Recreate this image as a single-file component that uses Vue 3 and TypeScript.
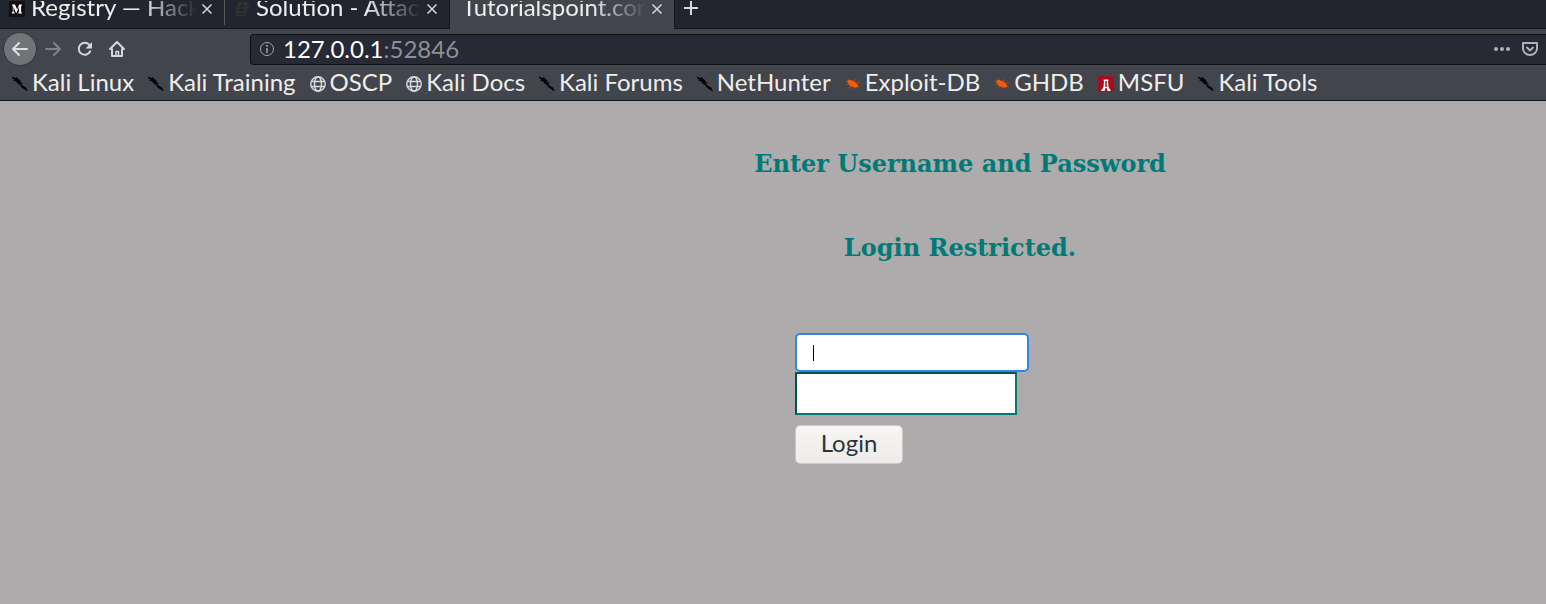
<script setup lang="ts">
import { ref } from 'vue'

interface Bookmark {
  name: string
  icon: 'kali' | 'globe' | 'bug' | 'msfu'
}

const bookmarks: Bookmark[] = [
  { name: 'Kali Linux', icon: 'kali' },
  { name: 'Kali Training', icon: 'kali' },
  { name: 'OSCP', icon: 'globe' },
  { name: 'Kali Docs', icon: 'globe' },
  { name: 'Kali Forums', icon: 'kali' },
  { name: 'NetHunter', icon: 'kali' },
  { name: 'Exploit-DB', icon: 'bug' },
  { name: 'GHDB', icon: 'bug' },
  { name: 'MSFU', icon: 'msfu' },
  { name: 'Kali Tools', icon: 'kali' },
]

const tabs = [
  { title: 'Registry — Hack', icon: 'medium' },
  { title: 'Solution - Attack', icon: 'book' },
  { title: 'Tutorialspoint.com', icon: '' },
]
const activeTab = ref(2)
const username = ref('')
const password = ref('')
</script>

<template>
  <div class="browser">
    <nav class="tab-strip" aria-label="Tabs">
      <div v-for="(tab, i) in tabs" :key="tab.title" class="tab" :class="{ active: i === activeTab }">
        <svg v-if="tab.icon === 'medium'" class="icon" viewBox="0 0 16 16" aria-hidden="true">
          <rect width="16" height="16" fill="#12100e" />
          <path d="M3 3.5h3l2.2 5 2-5H13v.8l-.9.8v5.8l.9.8v.8H9.2v-.8l.9-.8V5.800L7.500 12H7L4.500 6v4.600l1.100 1.200v.7H2.800v-.7l1-1.200V5.200L3 4.200z" fill="#fff" />
        </svg>
        <svg v-else-if="tab.icon === 'book'" class="icon" viewBox="0 0 16 16" aria-hidden="true">
          <path d="M4.500 1h9.500l-3 11.500H1.500z" fill="#34332f" />
          <path d="M1.500 12.500l1 2H11.500L15 3" fill="none" stroke="#34332f" />
          <path d="M6 4.500l1 1.500 2-2 1.500 2M5 9.500l2-1.500 1 2 2-2" fill="none" stroke="#202126" stroke-width="1.500" />
        </svg>
        <button class="tab-title" @click="activeTab = i">{{ tab.title }}</button>
        <button class="tab-close" aria-label="Close tab">
          <svg class="icon" viewBox="0 0 16 16" aria-hidden="true">
            <path d="M3.500 3.500l9 9M12.500 3.500l-9 9" stroke="#d6d7d8" stroke-width="1.500" />
          </svg>
        </button>
      </div>
      <button class="new-tab" aria-label="New tab">
        <svg class="icon" viewBox="0 0 16 16" aria-hidden="true">
          <path d="M8 1v14M1 8h14" stroke="#d8d9da" stroke-width="2" />
        </svg>
      </button>
    </nav>

    <div class="toolbar">
      <button class="nav-button back" aria-label="Back">
        <svg class="icon" viewBox="0 0 16 16" fill="none" stroke="#dedede" stroke-width="2" stroke-linecap="round" stroke-linejoin="round" aria-hidden="true">
          <path d="M15 8H1.500M7 2L1 8l6 6" />
        </svg>
      </button>
      <button class="nav-button" aria-label="Forward">
        <svg class="icon" viewBox="0 0 16 16" fill="none" stroke="#808185" stroke-width="2" stroke-linecap="round" stroke-linejoin="round" aria-hidden="true">
          <path d="M1 8h13.500M9 2l6 6-6 6" />
        </svg>
      </button>
      <button class="nav-button" aria-label="Reload">
        <svg class="icon" viewBox="0 0 16 16" fill="none" aria-hidden="true">
          <path d="M13.200 10.300A6 6 0 1 1 12.300 3.800" stroke="#d5d6d5" stroke-width="2" stroke-linecap="round" />
          <path d="M15 1v6.500H8.500z" fill="#d5d6d5" />
        </svg>
      </button>
      <button class="nav-button" aria-label="Home">
        <svg class="icon" viewBox="0 0 16 16" fill="none" stroke="#d5d6d5" stroke-width="2" stroke-linecap="round" stroke-linejoin="round" aria-hidden="true">
          <path d="M1 8l7-7 7 7M3 8v7h10V8" />
          <path d="M7 15v-4.500h2.500V15" stroke-width="1.500" />
        </svg>
      </button>
      <div class="address">
        <svg class="icon" viewBox="0 0 16 16" aria-hidden="true">
          <circle cx="8" cy="8" r="6.500" fill="none" stroke="#a5a6aa" />
          <path d="M8 7v5" stroke="#a5a6aa" stroke-width="1.500" />
          <circle cx="8" cy="4.800" r="1" fill="#a5a6aa" />
        </svg>
        <span class="url">127.0.0.1<span class="port">:52846</span></span>
        <button class="page-action" aria-label="Page actions">
          <svg class="icon" viewBox="0 0 16 16" fill="#b1b1b3" aria-hidden="true">
            <circle cx="2" cy="8" r="2" /><circle cx="8" cy="8" r="2" /><circle cx="14" cy="8" r="2" />
          </svg>
        </button>
        <button class="page-action" aria-label="Save to Pocket">
          <svg class="icon" viewBox="0 0 16 16" fill="none" stroke="#b1b1b3" stroke-width="2" stroke-linecap="round" stroke-linejoin="round" aria-hidden="true">
            <path d="M1 2h14v5.500a7 6.500 0 0 1-14 0z" />
            <path d="M5 6.500l3 3 3-3" />
          </svg>
        </button>
      </div>
    </div>

    <nav class="bookmarks" aria-label="Bookmarks">
      <a v-for="b in bookmarks" :key="b.name" class="bookmark" href="#">
        <svg v-if="b.icon === 'kali'" class="icon" viewBox="0 0 16 16" aria-hidden="true">
          <path d="M0 .5l3 1.500L5 1l.8 1.500L8 4l1.200 2 .3 2.500 2 1.500 2.500 1.500L16 15l-2-.5-2-1.500-2.500-1.500L8 9 5.500 7.500 4 5.500 1 4.500l1.500-.8L0 2z" fill="#050505" />
          <path d="M8 5l3 3" stroke="#1c1d20" fill="none" />
        </svg>
        <svg v-else-if="b.icon === 'globe'" class="icon" viewBox="0 0 16 16" fill="none" stroke="#d7d8d8" stroke-width="1.500" aria-hidden="true">
          <circle cx="8" cy="8" r="7.200" />
          <ellipse cx="8" cy="8" rx="3.500" ry="7.200" />
          <path d="M1.500 5.500h13M1.500 10.500h13" />
        </svg>
        <svg v-else-if="b.icon === 'bug'" class="icon" viewBox="0 0 16 16" aria-hidden="true">
          <path d="M2 5.500C3 3.500 5 3.500 7 4.500c3 .8 5 2.500 6.500 5.500-1 1.500-2.500 2-4.500 1.500C6 11 3 9 2 5.500z" fill="#ef5a0d" />
          <path d="M5 4L4 2.500M9 5l1.500-2M11.500 7l3-.5M13 10l1.500 1.500M9 11.500l-1 1.500M6 10.500L3.500 12M3 8L1 9M2.500 5.500L.5 5" stroke="#a94c1b" fill="none" />
        </svg>
        <svg v-else class="icon" viewBox="0 0 16 16" aria-hidden="true">
          <rect width="16" height="16" fill="#a50e1f" />
          <path d="M5.500 3.500h5v1L10 5l.5 6 2.500 4H9.500L8.500 12h-1l-1 3H3l2.500-4 .5-6-.5-.5z" fill="#fff" />
          <path d="M8 5v6" stroke="#a50e1f" stroke-width="1.500" />
        </svg>
        <span>{{ b.name }}</span>
      </a>
    </nav>

    <main class="page">
      <h2>Enter Username and Password</h2>
      <h2>Login Restricted.</h2>
      <form class="login" @submit.prevent>
        <div class="user-field">
          <input v-model="username" class="username" type="text" aria-label="Username" />
          <span class="caret" aria-hidden="true"></span>
        </div>
        <input v-model="password" class="password" type="password" aria-label="Password" />
        <button class="submit" type="submit">Login</button>
      </form>
    </main>
  </div>
</template>

<style>
body {
  margin: 0;
  background: #adabab;
}
</style>

<style scoped>
.browser {
  min-height: 100vh;
  overflow: hidden;
  font-family: Lato, "Open Sans", sans-serif;
  font-size: 24px;
  color: #eeeeec;
}

.browser * {
  box-sizing: border-box;
}

button {
  margin: 0;
  padding: 0;
  border: 0;
  background: none;
  color: inherit;
  font: inherit;
}

.icon {
  display: block;
  flex: none;
  width: 16px;
  height: 16px;
}

.tab-strip {
  display: flex;
  height: 29px;
  background: #23252e;
  border-bottom: 1px solid #15161b;
}

.tab {
  display: flex;
  align-items: flex-start;
  gap: 6px;
  width: 225px;
  height: 29px;
  padding: 1px 9px 0;
  border-right: 1px solid #15161b;
}

.tab:first-child {
  height: 25px;
  border-right-color: #55575d;
}

.tab.active {
  padding-left: 12px;
  background: #42454c;
}

.tab-title {
  display: flex;
  flex: 1;
  min-width: 0;
  height: 27px;
  margin-right: -4px;
  overflow: hidden;
  line-height: 12px;
  text-align: left;
  white-space: nowrap;
  mask-image: linear-gradient(to right, #000 calc(100% - 56px), transparent);
}

.new-tab {
  height: 16px;
  padding-left: 8px;
}

.toolbar {
  display: flex;
  align-items: center;
  height: 36px;
  padding-top: 4px;
  background: #42454c;
}

.nav-button {
  display: grid;
  place-items: center;
  width: 32px;
  height: 32px;
}

.nav-button.back {
  width: 34px;
  height: 34px;
  margin-left: 3px;
  border: 1px solid #34363b;
  border-radius: 50%;
  background: #727377;
}

.address {
  display: flex;
  flex: 1;
  align-items: center;
  height: 31px;
  margin-left: 117px;
  padding: 0 8px;
  border: 1px solid #0f1013;
  border-right: 0;
  border-radius: 4px 0 0 4px;
  background: #272935;
}

.url {
  flex: 1;
  padding: 0 0 2px 8px;
  line-height: 27px;
  color: #fff;
}

.port {
  color: #8f9096;
}

.page-action {
  margin-left: 12px;
}

.bookmarks {
  display: flex;
  align-items: flex-start;
  gap: 14px;
  height: 36px;
  padding-left: 12px;
  background: #42454c;
  border-bottom: 1px solid #101114;
}

.bookmark {
  display: flex;
  align-items: center;
  gap: 4px;
  color: inherit;
  line-height: 34px;
  text-decoration: none;
  white-space: nowrap;
}

.bookmark .icon {
  margin-top: 4px;
}

.page {
  padding: 49px 0 0 374px;
}

h2 {
  margin: 0 0 56px;
  font: bold 24px/28px "DejaVu Serif", serif;
  color: #007a77;
  text-align: center;
}

.login {
  display: flex;
  flex-direction: column;
  align-items: flex-start;
  width: 330px;
  margin: 0 auto;
  padding-top: 15px;
}

.user-field {
  position: relative;
}

input {
  display: block;
  font: inherit;
  background: #fff;
  outline: 0;
}

.username {
  width: 234px;
  height: 39px;
  padding: 0 16px;
  border: 2px solid #3584e4;
  border-radius: 5px;
}

.caret {
  position: absolute;
  left: 18px;
  top: 12px;
  width: 1px;
  height: 16px;
  background: #000;
}

.password {
  width: 222px;
  height: 43px;
  padding: 0 8px;
  border: 2px solid;
  border-color: #005450 #007a74 #007a74 #005450;
}

.submit {
  width: 108px;
  height: 39px;
  margin-top: 10px;
  padding-bottom: 4px;
  border: 1px solid #cdc7c2;
  border-radius: 5px;
  background: linear-gradient(#f6f5f4, #edebe9);
  color: #2e3436;
}
</style>
